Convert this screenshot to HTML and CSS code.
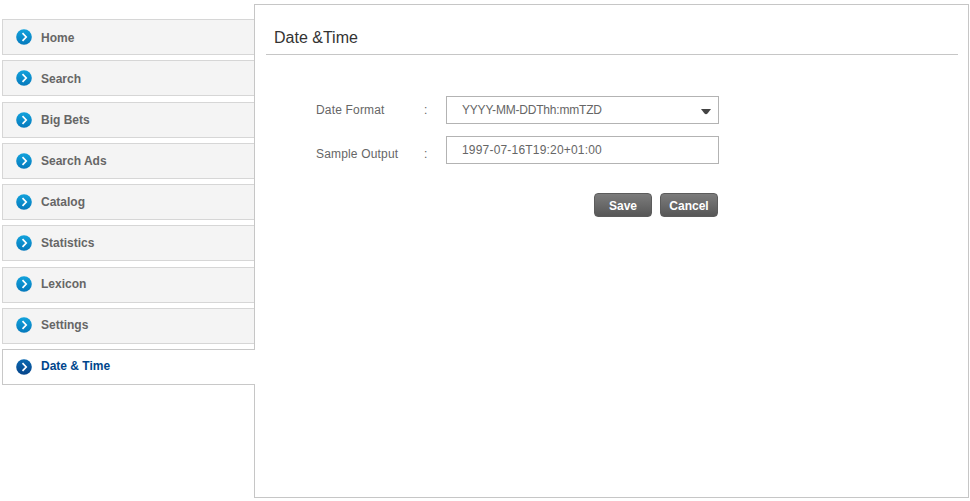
FILE: index.html
```html
<!DOCTYPE html>
<html lang="en">
<head>
<meta charset="utf-8">
<title>Date &amp; Time</title>
<link rel="stylesheet" href="styles.css">
</head>
<body>
<svg width="0" height="0" class="defs" aria-hidden="true">
  <defs>
    <linearGradient id="blue" x1="0" y1="0" x2="0" y2="1"><stop offset="0" stop-color="#12a2dc"/><stop offset="1" stop-color="#0579bc"/></linearGradient>
    <linearGradient id="navy" x1="0" y1="0" x2="0" y2="1"><stop offset="0" stop-color="#0a68b0"/><stop offset="1" stop-color="#06448a"/></linearGradient>
    <symbol id="chev" viewBox="0 0 16 16"><circle cx="8" cy="8" r="7.8"/><path d="M6.5 4.2 10.2 8 6.5 11.8" fill="none" stroke="#fff" stroke-width="1.7"/></symbol>
  </defs>
</svg>
<div class="page">
  <nav class="menu">
    <a class="item first"><svg class="icon"><use href="#chev"/></svg><span>Home</span></a>
    <a class="item first"><svg class="icon"><use href="#chev"/></svg><span>Search</span></a>
    <a class="item"><svg class="icon"><use href="#chev"/></svg><span>Big Bets</span></a>
    <a class="item"><svg class="icon"><use href="#chev"/></svg><span>Search Ads</span></a>
    <a class="item"><svg class="icon"><use href="#chev"/></svg><span>Catalog</span></a>
    <a class="item"><svg class="icon"><use href="#chev"/></svg><span>Statistics</span></a>
    <a class="item raised"><svg class="icon"><use href="#chev"/></svg><span>Lexicon</span></a>
    <a class="item raised"><svg class="icon"><use href="#chev"/></svg><span>Settings</span></a>
    <a class="item raised active"><svg class="icon"><use href="#chev"/></svg><span>Date &amp; Time</span></a>
  </nav>
  <main class="panel">
    <h1 class="title">Date &amp;Time</h1>
    <div class="row">
      <span class="label format">Date Format</span><span class="colon">:</span>
      <div class="field"><span class="value-format">YYYY-MM-DDThh:mmTZD</span><svg class="arrow" viewBox="0 0 10 6"><path d="M0 0H10L6.5 4.5Q5 6 3.5 4.5Z" fill="#444"/></svg></div>
    </div>
    <div class="row sample">
      <span class="label output">Sample Output</span><span class="colon">:</span>
      <div class="field"><span class="value-sample">1997-07-16T19:20+01:00</span></div>
    </div>
    <div class="actions"><button class="button">Save</button><button class="button">Cancel</button></div>
  </main>
</div>
</body>
</html>
```
FILE: styles.css
```css
* { box-sizing: border-box; }
body { margin: 0; background: #fff; font: 12px/16px "Liberation Sans", Arial, sans-serif; color: #666; }
.defs { display: block; }
.page { display: flex; padding: 4px 0 0 2px; height: 501px; }
.menu { width: 252px; padding-top: 15px; }
.item { display: flex; align-items: center; height: 36px; margin-bottom: 5.25px; padding-left: 13px; border: 1px solid #d6d6d6; border-right: 0; background: #f4f4f4; font-weight: bold; }
.first span { padding-top: 2px; }
.raised { padding-bottom: 1px; }
.raised span { padding-bottom: 1px; }
.icon { width: 16px; height: 16px; margin-right: 9px; fill: url(#blue); }
.item.active { position: relative; width: 253px; border-color: #c8c8c8; background: #fff; color: #00468c; }
.active .icon { fill: url(#navy); }
.panel { width: 715px; height: 494px; border: 1px solid #c6c6c6; padding: 0 10px 0 11px; }
.title { margin: 0 0 41px; height: 50px; padding: 22px 0 0 8px; border-bottom: 1px solid #c6c6c6; font-size: 16px; line-height: 22px; font-weight: normal; color: #333; }
.row { display: flex; height: 28px; padding-left: 50px; margin-bottom: 12px; }
.label { width: 108px; padding-top: 6px; letter-spacing: .17px; }
.colon { width: 22px; padding-top: 6px; }
.sample .label, .sample .colon { padding-top: 10px; }
.field { display: flex; justify-content: space-between; width: 273px; height: 28px; padding: 5px 7px 0 15px; border: 1px solid #b3b3b3; }
.value-format { letter-spacing: -.2px; }
.value-sample { letter-spacing: .19px; }
.arrow { width: 10px; height: 6px; margin-top: 7px; }
.actions { display: flex; gap: 8px; margin-top: 29px; padding-left: 328px; }
.button { width: 58px; height: 24px; padding: 1px 0 0; border: 1px solid #5c5c5c; border-radius: 4px; background: linear-gradient(#7c7c7c, #575757); color: #fff; font: bold 12px/16px "Liberation Sans", Arial, sans-serif; }
```
